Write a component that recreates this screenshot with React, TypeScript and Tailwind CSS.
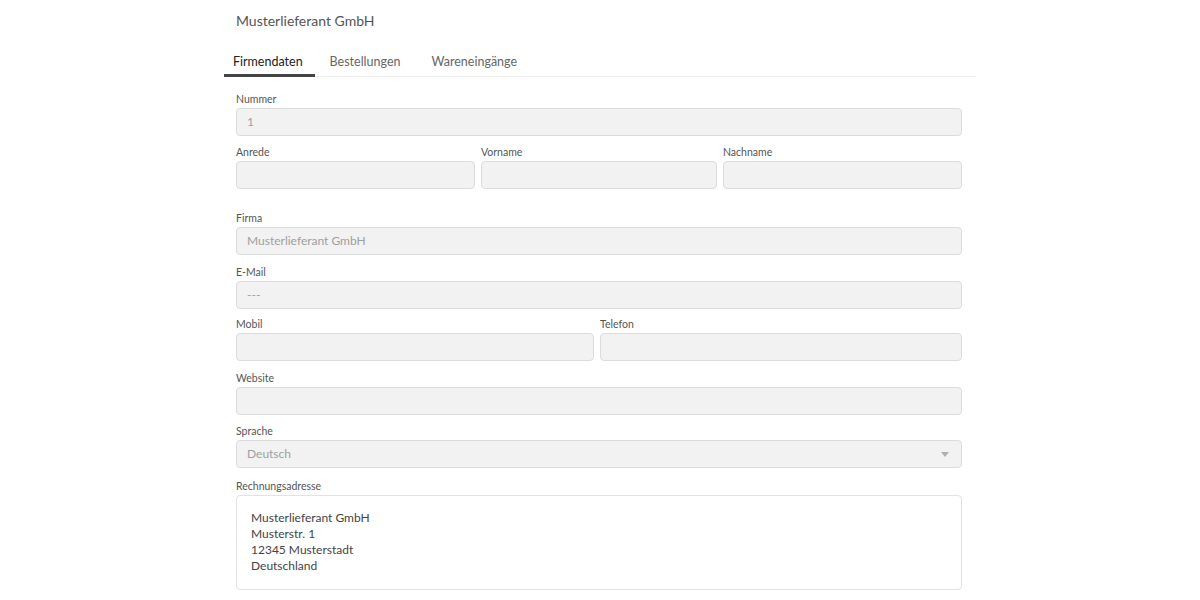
import React from 'react';

const font = { fontFamily: 'Lato, "Noto Sans", sans-serif' };

function Label({ children }: { children: React.ReactNode }) {
  return <div className="h-4 mb-px text-[10.5px] leading-4 text-[#555]">{children}</div>;
}

function Field({ label, value, className = 'mb-2' }: { label: string; value?: string; className?: string }) {
  return (
    <div className={`min-w-0 ${className}`}>
      <Label>{label}</Label>
      <div className="h-7 rounded border border-[#dcdcdc] bg-[#f2f2f2] px-[10px] text-[12px] leading-[26px] text-[#a0a0a0]">
        {value}
      </div>
    </div>
  );
}

export default function App() {
  return (
    <div className="min-h-screen bg-white" style={font}>
      <div className="mx-auto w-[752px]">
        {/* Header */}
        <div className="h-[42px] pl-3 pt-[11px] text-[14px] leading-5 text-[#555]">Musterlieferant GmbH</div>

        {/* Tabs */}
        <div className="flex border-b border-[#ececec] text-[12.5px]">
          <div className="border-b-[3px] border-[#444] pl-[9px] pr-[12px] pt-[10px] pb-[2px] -mb-px leading-5 text-[#222]">Firmendaten</div>
          <div className="pl-[15px] pr-[15px] pt-[10px] pb-[4px] leading-5 text-[#666]">Bestellungen</div>
          <div className="pl-[16px] pr-3 pt-[10px] pb-[4px] leading-5 text-[#666]">Wareneingänge</div>
        </div>

        {/* Form */}
        <div className="pl-3 pr-[14px] pt-[14px]">
          <Field label="Nummer" value="1" />
          <div className="flex gap-[6px] mb-[21px]">
            <Field label="Anrede" className="w-[239px]" />
            <Field label="Vorname" className="w-[236px]" />
            <Field label="Nachname" className="flex-1" />
          </div>
          <Field label="Firma" value="Musterlieferant GmbH" className="mb-[9px]" />
          <Field label="E-Mail" value="---" className="mb-[7px]" />
          <div className="flex gap-[6px] mb-[9px]">
            <Field label="Mobil" className="w-[358px]" />
            <Field label="Telefon" className="flex-1" />
          </div>
          <Field label="Website" />
          <div className="mb-[10px]">
            <Label>Sprache</Label>
            <div className="flex h-7 items-center justify-between rounded border border-[#dcdcdc] bg-[#f2f2f2] px-[10px] text-[12px] text-[#a0a0a0]">
              <span>Deutsch</span>
              <svg width="8" height="5" viewBox="0 0 8 5" className="mr-[2px]">
                <path d="M0 0h8L4 5z" fill="#b0b0b0" />
              </svg>
            </div>
          </div>
          <div>
            <Label>Rechnungsadresse</Label>
            <div className="h-[95px] rounded border border-[#e2e2e2] bg-white px-[14px] pt-[14px] text-[12px] leading-4 text-[#444]">
              <div>Musterlieferant GmbH</div>
              <div>Musterstr. 1</div>
              <div>12345 Musterstadt</div>
              <div>Deutschland</div>
            </div>
          </div>
        </div>
      </div>
    </div>
  );
}
